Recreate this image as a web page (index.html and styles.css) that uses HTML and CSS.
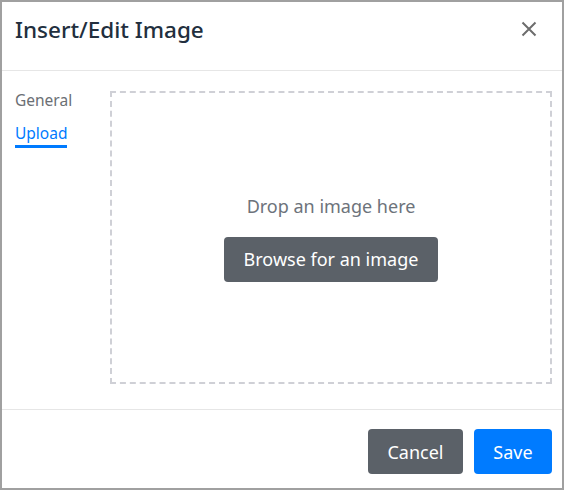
FILE: index.html
```html
<!DOCTYPE html>
<html>
<head>
<meta charset="utf-8">
<link rel="stylesheet" href="styles.css">
</head>
<body>
<div class="dialog">
  <div class="header">
    <div class="title">Insert/Edit Image</div>
    <button class="close" aria-label="Close">
      <svg width="16" height="16" viewBox="0 0 16 16"><path d="M1.5 1.5 L14.5 14.5 M14.5 1.5 L1.5 14.5" stroke="#6d6d6d" stroke-width="2" fill="none"/></svg>
    </button>
  </div>
  <div class="body">
    <div class="tabs">
      <div class="tab">General</div>
      <div class="tab active">Upload</div>
    </div>
    <div class="dropzone">
      <div class="drop-text">Drop an image here</div>
      <button class="btn btn-secondary browse">Browse for an image</button>
    </div>
  </div>
  <div class="footer">
    <button class="btn btn-secondary">Cancel</button>
    <button class="btn btn-primary">Save</button>
  </div>
</div>
</body>
</html>
```
FILE: styles.css
```css
* { box-sizing: border-box; }
html, body { margin: 0; padding: 0; background: #fff; }
body { font-family: "Noto Sans", "Open Sans", sans-serif; color: #222f3e; }
.dialog {
  width: 564px;
  height: 490px;
  border: 2px solid #a0a0a0;
  display: flex;
  flex-direction: column;
  background: #fff;
}
.header {
  height: 69px;
  flex: none;
  border-bottom: 1px solid #e6e6e6;
  display: flex;
  align-items: center;
  justify-content: space-between;
  padding: 0 21px 0 13px;
}
.title {
  font-size: 22.5px;
  font-weight: 500;
  color: #222f3e;
  margin-top: -14px;
}
.close {
  border: 0;
  background: none;
  padding: 0;
  width: 24px;
  height: 24px;
  display: flex;
  align-items: center;
  justify-content: center;
  margin-top: -14px;
}
.body {
  flex: 1;
  display: flex;
  padding: 20px 10px 0 13px;
  border-bottom: 1px solid #e6e6e6;
}
.tabs {
  width: 95px;
  flex: none;
  display: flex;
  flex-direction: column;
  align-items: flex-start;
  margin-top: -2px;
}
.tab {
  font-size: 15.5px;
  color: #6b6f74;
  line-height: 22px;
  height: 33px;
}
.tab.active {
  color: #007bff;
  height: auto;
  line-height: 22px;
  padding-bottom: 1px;
  border-bottom: 3px solid #007bff;
}
.dropzone {
  width: 442px;
  height: 293px;
  border: 2px dashed #cfd0d6;
  display: flex;
  flex-direction: column;
  align-items: center;
  justify-content: center;
}
.drop-text {
  font-size: 18px;
  color: #6d737b;
  margin-bottom: 19px;
}
.btn {
  font-family: inherit;
  border: 0;
  border-radius: 4px;
  color: #fff;
  font-size: 18px;
  height: 45px;
  padding: 0 20px;
}
.btn-secondary { background: #5b6168; }
.btn-primary { background: #007bff; }
.browse { width: 214px; padding: 0; }
.footer {
  flex: none;
  height: 78px;
  display: flex;
  justify-content: flex-end;
  gap: 11px;
  padding: 19px 10px 0 0;
}
.footer .btn { width: 95px; padding: 0; }
.footer .btn-primary { width: 78px; }
```
